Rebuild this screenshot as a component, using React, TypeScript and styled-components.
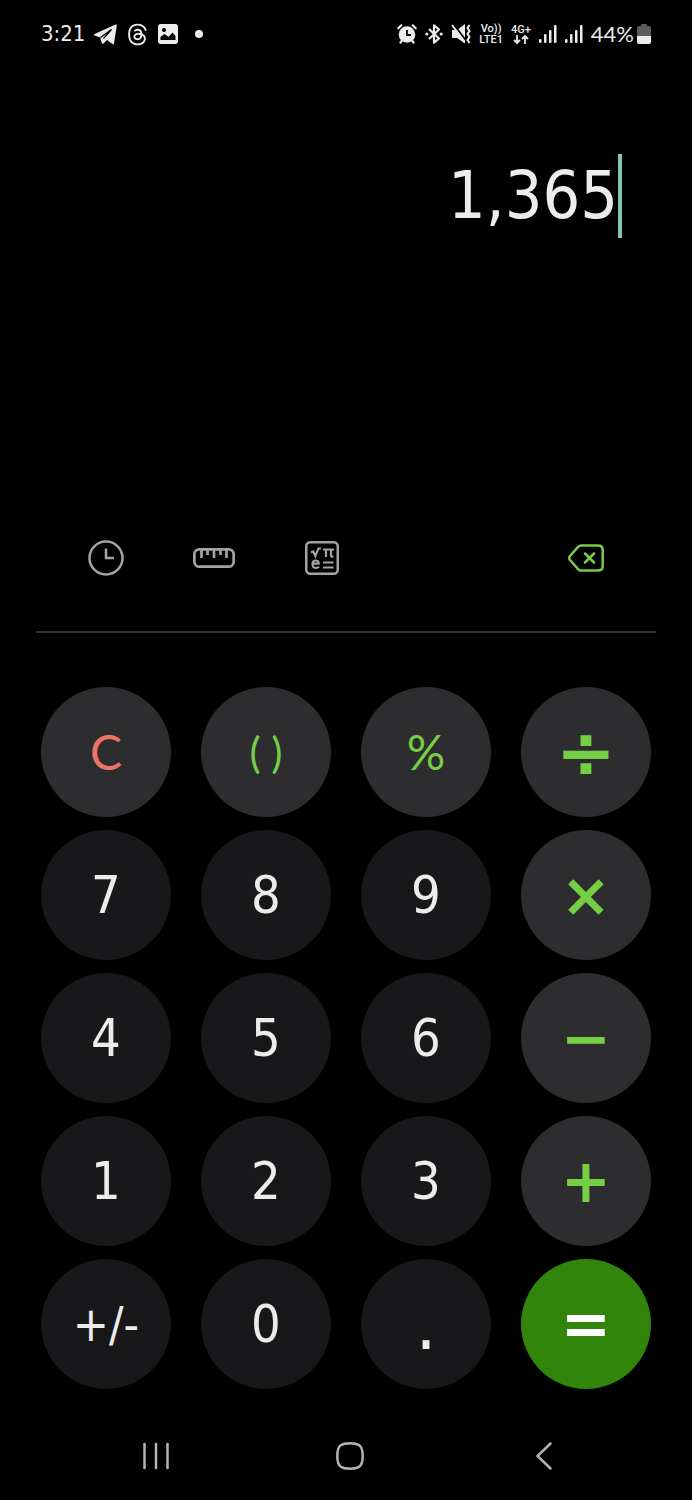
import React from "react";
import styled, { createGlobalStyle } from "styled-components";
import { FaThreads } from "react-icons/fa6";

const GlobalStyle = createGlobalStyle`
  * { box-sizing: border-box; }
  body { margin: 0; background: #000; }
`;

const digits = `"DejaVu Sans Condensed", "DejaVu Sans", sans-serif`;
const light = `Lato, "Open Sans", sans-serif`;

const Screen = styled.main`
  display: flex;
  flex-direction: column;
  min-height: 100vh;
  background: #000;
  color: #ececec;
  font-family: ${digits};
`;

const StatusBar = styled.header`
  display: flex;
  align-items: center;
  justify-content: space-between;
  height: 68px;
  padding: 0 41px;
`;

const StatusGroup = styled.div<{ $gap: number }>`
  display: flex;
  align-items: center;
  gap: ${(p) => p.$gap}px;
  svg { display: block; }
`;

const Clock = styled.time`
  font-size: 22px;
  line-height: 24px;
`;

const Dot = styled.span`
  width: 8px;
  height: 8px;
  margin-left: 8px;
  border-radius: 50%;
  background: #ececec;
`;

const NetworkLabel = styled.span`
  display: flex;
  flex-direction: column;
  align-items: center;
  font: 500 11px/11px Roboto, sans-serif;
`;

const Battery = styled.span`
  display: flex;
  align-items: center;
  gap: 3px;
  font: 400 22px/24px ${light};
`;

const Display = styled.section`
  display: flex;
  height: 455px;
  padding: 86px 70px 0;
`;

const Value = styled.input`
  flex: 1;
  min-width: 0;
  height: 84px;
  padding: 0;
  border: 0;
  outline: 0;
  background: none;
  color: inherit;
  font: 400 66px/84px ${digits};
  text-align: right;
`;

const Caret = styled.span`
  width: 4px;
  height: 84px;
  background: #86c5b5;
`;

const Toolbar = styled.nav`
  display: flex;
  padding: 0 52px;
  margin: 0 0 38px;
`;

const ToolButton = styled.button<{ $last?: boolean }>`
  display: flex;
  align-items: center;
  justify-content: center;
  width: 108px;
  height: 70px;
  margin-left: ${(p) => (p.$last ? "auto" : "0")};
  padding: 0;
  border: 0;
  background: none;
  color: ${(p) => (p.$last ? "#78cb4a" : "#a3a3a3")};
`;

const Divider = styled.hr`
  align-self: stretch;
  height: 2px;
  margin: 0 36px;
  border: 0;
  background: #303030;
`;

const Keypad = styled.section`
  display: grid;
  grid-template-columns: repeat(4, 1fr);
  gap: 13px 30px;
  padding: 54px 41px 32px;
`;

type Tone = "digit" | "clear" | "function" | "operator" | "equals";

const toneStyle: Record<Tone, string> = {
  digit: `background: #18181a; color: #ececec; font: 400 52px/64px ${digits};`,
  clear: `background: #2d2d2f; color: #ee7468; font: 400 48px/64px ${light};`,
  function: `background: #2d2d2f; color: #74cf45; font: 400 48px/64px ${light};`,
  operator: `background: #2d2d2f; color: #74cf45; font: 700 60px/64px "DejaVu Sans", sans-serif;`,
  equals: `background: #30850a; color: #fff; font: 700 60px/64px "DejaVu Sans", sans-serif;`,
};

const Key = styled.button<{ $tone: Tone; $size?: number }>`
  display: flex;
  align-items: center;
  justify-content: center;
  aspect-ratio: 1;
  padding: 0;
  border: 0;
  border-radius: 50%;
  white-space: pre;
  ${(p) => toneStyle[p.$tone]}
  ${(p) => (p.$size ? `font-size: ${p.$size}px;` : "")}
`;

const NavBar = styled.nav`
  display: flex;
  padding: 0 51px 0 59px;
`;

const NavButton = styled.button`
  display: flex;
  flex: 1;
  align-items: center;
  justify-content: center;
  height: 70px;
  padding: 0;
  border: 0;
  background: none;
  color: #b4b4b4;
`;

const PlaneIcon = () => (
  <svg width="23" height="21" viewBox="0 0 23 21">
    <path d="M.5 10 21.500.5q1.500-.5 1.300 1L20 19.500q-.3 1.300-1.500.6L13 16l-3.500 3.500Q8 20.500 7.600 18.500L6.300 13.500.5 11.500Q-.3 10.700.5 10z" fill="#ececec" />
    <path d="M6.500 13.500 17.500 5.500 9.500 14.500" fill="none" stroke="#000" strokeWidth="1.200" />
  </svg>
);

const PictureIcon = () => (
  <svg width="20" height="20" viewBox="0 0 20 20">
    <rect width="20" height="20" rx="3" fill="#ececec" />
    <circle cx="6" cy="6" r="2" fill="#000" />
    <path d="M2.500 16v-3l4-3 4 3 4-4.500 3 3.500v4z" fill="#000" />
  </svg>
);

const AlarmIcon = () => (
  <svg width="20" height="20" viewBox="0 0 20 20" fill="none" stroke="#ececec" strokeWidth="2.200" strokeLinecap="round">
    <circle cx="10" cy="10.500" r="8.300" fill="#ececec" stroke="none" />
    <path d="M1.300 4.300 4.300 1.300M18.700 4.300 15.700 1.300M5 16.500 3.500 18.500M15 16.500l1.500 2" />
    <path d="M10 6v5h4" stroke="#000" strokeWidth="1.800" strokeLinecap="butt" />
  </svg>
);

const BluetoothIcon = () => (
  <svg width="18" height="20" viewBox="0 0 18 20" fill="none" stroke="#ececec" strokeWidth="2.200" strokeLinejoin="round">
    <path d="M4 5l10 9.500L9 18.700V1.300L14 5.500 4 15" />
    <circle cx="1.800" cy="10" r="1.600" fill="#ececec" stroke="none" />
    <circle cx="16.200" cy="10" r="1.600" fill="#ececec" stroke="none" />
  </svg>
);

const MuteIcon = () => (
  <svg width="20" height="20" viewBox="0 0 20 20" fill="none">
    <path d="M1 6h5l8-6v19.500L6 14H1z" fill="#ececec" />
    <path d="M2.500 0 15 16.500" stroke="#000" strokeWidth="1.800" />
    <path d="M1 1 13.500 18" stroke="#ececec" strokeWidth="2" />
    <path d="M18.500 1l-2 3 2 3-2 3 2 3-2 3 2 3" stroke="#ececec" strokeWidth="2" />
  </svg>
);

const ArrowsIcon = () => (
  <svg width="16" height="10" viewBox="0 0 16 10" fill="none" stroke="#ececec" strokeWidth="1.800">
    <path d="M4 0v8M1 5l3 3 3-3M12 9V1M9 4l3-3 3 3" />
  </svg>
);

const SignalIcon = () => (
  <svg width="18" height="18" viewBox="0 0 18 18" fill="#ececec">
    <rect x="0" y="14" width="2.500" height="4" rx="1" />
    <rect x="5" y="9" width="2.500" height="9" rx="1" />
    <rect x="10" y="5" width="2.500" height="13" rx="1" />
    <rect x="15" y="0" width="2.500" height="18" rx="1" />
  </svg>
);

const BatteryIcon = () => (
  <svg width="14" height="20" viewBox="0 0 14 20">
    <path d="M4 2V1q0-1 1-1h4q1 0 1 1v1h2q2 0 2 2v9H0V4q0-2 2-2z" fill="#5c5c5c" />
    <path d="M0 12h14v6q0 2-2 2H2q-2 0-2-2z" fill="#ececec" />
  </svg>
);

const HistoryIcon = () => (
  <svg width="36" height="36" viewBox="0 0 36 36" fill="none" stroke="currentColor" strokeWidth="2.500">
    <circle cx="18" cy="18" r="16.500" />
    <path d="M18 8.500V18h8" />
  </svg>
);

const RulerIcon = () => (
  <svg width="42" height="20" viewBox="0 0 42 20" fill="none" stroke="currentColor" strokeWidth="2.700">
    <rect x="1.350" y="1.350" width="39.300" height="17.300" rx="5" />
    <path d="M8.500 2v8M14.500 2v5M21 2v8M27.500 2v5M33.500 2v8" />
  </svg>
);

const ScientificIcon = () => (
  <svg width="34" height="34" viewBox="0 0 34 34" fill="none" stroke="currentColor" strokeWidth="2.500">
    <rect x="1.250" y="1.250" width="31.500" height="31.500" rx="4" />
    <path d="M6 11.500 8.200 10.500 10.300 15 13.500 7.500H16M18 8.500H29M21 8.500V16M26 8.500V14.500Q26 16 28.500 15.500M18 21.500H28.500M18 26.500H28.500" strokeWidth="2.200" />
    <path d="M7.500 22.700H13.700Q13.700 19.500 10.700 19.500 7.500 19.500 7.500 23.300 7.500 27 11 27 13 27 14 25.700" strokeWidth="2.200" />
  </svg>
);

const BackspaceIcon = () => (
  <svg width="36" height="28" viewBox="0 0 36 28" fill="none" stroke="currentColor" strokeWidth="2.500" strokeLinecap="round" strokeLinejoin="round">
    <path d="M13 1.500H30Q34.700 1.500 34.700 6V22Q34.700 26.500 30 26.500H13Q11.500 26.500 10.300 25.300L2 16Q.5 14 2 12L10.300 2.700Q11.500 1.500 13 1.500Z" />
    <path d="M17 9.500l9 9M26 9.500l-9 9" />
  </svg>
);

const RecentsIcon = () => (
  <svg width="28" height="28" viewBox="0 0 28 28" stroke="currentColor" strokeWidth="2.500" strokeLinecap="round">
    <path d="M2.500 2v24M14 2v24M25.500 2v24" />
  </svg>
);

const HomeIcon = () => (
  <svg width="28" height="28" viewBox="0 0 28 28" fill="none" stroke="currentColor" strokeWidth="2.500">
    <path d="M14 1.300Q20 1.300 23.200 3.300 26.700 5.500 26.700 14T23.200 24.700Q20 26.700 14 26.700T4.800 24.700Q1.300 22.500 1.300 14T4.800 3.300Q8 1.300 14 1.300Z" />
  </svg>
);

const BackIcon = () => (
  <svg width="16" height="28" viewBox="0 0 16 28" fill="none" stroke="currentColor" strokeWidth="2.500" strokeLinecap="round">
    <path d="M14.500 1.500 1.500 14l13 12.500" />
  </svg>
);

const keys: { label: string; tone: Tone; name?: string; size?: number }[] = [
  { label: "C", tone: "clear", name: "Clear" },
  { label: "( )", tone: "function", name: "Parentheses", size: 42 },
  { label: "%", tone: "function", name: "Percent" },
  { label: "÷", tone: "operator", name: "Divide", size: 72 },
  { label: "7", tone: "digit" },
  { label: "8", tone: "digit" },
  { label: "9", tone: "digit" },
  { label: "×", tone: "operator", name: "Multiply" },
  { label: "4", tone: "digit" },
  { label: "5", tone: "digit" },
  { label: "6", tone: "digit" },
  { label: "−", tone: "operator", name: "Subtract" },
  { label: "1", tone: "digit" },
  { label: "2", tone: "digit" },
  { label: "3", tone: "digit" },
  { label: "+", tone: "operator", name: "Add" },
  { label: "+/-", tone: "digit", name: "Change sign", size: 48 },
  { label: "0", tone: "digit" },
  { label: ".", tone: "digit", name: "Decimal point", size: 72 },
  { label: "=", tone: "equals", name: "Equals" },
];

export default function App() {
  return (
    <Screen>
      <GlobalStyle />
      <StatusBar>
        <StatusGroup $gap={9}>
          <Clock>3:21</Clock>
          <PlaneIcon />
          <FaThreads size={23} />
          <PictureIcon />
          <Dot />
        </StatusGroup>
        <StatusGroup $gap={8}>
          <AlarmIcon />
          <BluetoothIcon />
          <MuteIcon />
          <NetworkLabel>
            <span>Vo))</span>
            <span>LTE1</span>
          </NetworkLabel>
          <NetworkLabel>
            <span>4G+</span>
            <ArrowsIcon />
          </NetworkLabel>
          <SignalIcon />
          <SignalIcon />
          <Battery>
            44%
            <BatteryIcon />
          </Battery>
        </StatusGroup>
      </StatusBar>
      <Display>
        <Value aria-label="Calculator display" defaultValue="1,365" />
        <Caret />
      </Display>
      <Toolbar aria-label="Tools">
        <ToolButton aria-label="History"><HistoryIcon /></ToolButton>
        <ToolButton aria-label="Unit converter"><RulerIcon /></ToolButton>
        <ToolButton aria-label="Scientific mode"><ScientificIcon /></ToolButton>
        <ToolButton $last aria-label="Backspace"><BackspaceIcon /></ToolButton>
      </Toolbar>
      <Divider />
      <Keypad aria-label="Keypad">
        {keys.map((k) => (
          <Key key={k.label} $tone={k.tone} $size={k.size} aria-label={k.name}>
            {k.label}
          </Key>
        ))}
      </Keypad>
      <NavBar aria-label="System navigation">
        <NavButton aria-label="Recent apps"><RecentsIcon /></NavButton>
        <NavButton aria-label="Home"><HomeIcon /></NavButton>
        <NavButton aria-label="Back"><BackIcon /></NavButton>
      </NavBar>
    </Screen>
  );
}
